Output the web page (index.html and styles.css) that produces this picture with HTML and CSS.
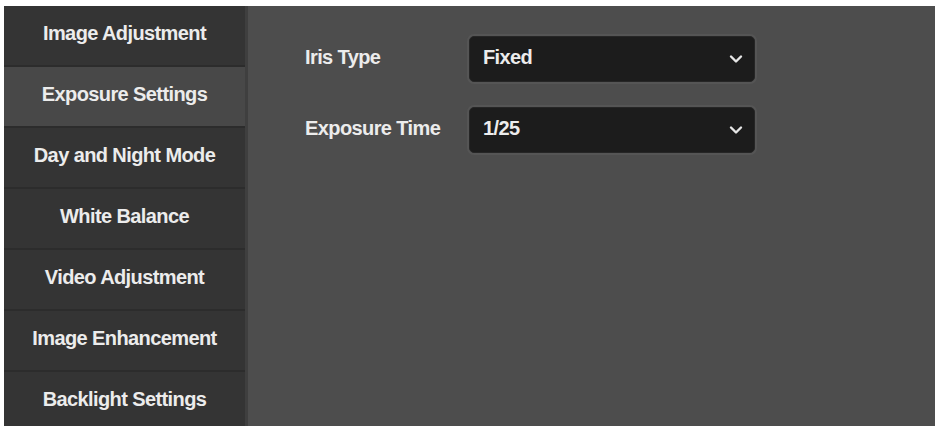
FILE: index.html
```html
<!DOCTYPE html>
<html lang="en">

<head>
    <meta charset="UTF-8">
    <meta name="viewport" content="width=device-width, initial-scale=1.0">
    <title>Image Settings</title>
    <link rel="stylesheet" href="styles.css">
</head>

<body>
    <div class="frame">
        <ul class="menu">
            <li>Image Adjustment</li>
            <li class="active">Exposure Settings</li>
            <li>Day and Night Mode</li>
            <li>White Balance</li>
            <li>Video Adjustment</li>
            <li>Image Enhancement</li>
            <li>Backlight Settings</li>
        </ul>

        <div class="panel">
            <div class="row">
                <label>Iris Type</label>
                <div class="select">
                    <span>Fixed</span>
                    <svg width="14" height="10" viewBox="0 0 14 10"><path d="M2 2.5 L7 7.5 L12 2.5" fill="none" stroke="#e6e6e6" stroke-width="2.4" stroke-linecap="round" stroke-linejoin="round"/></svg>
                </div>
            </div>
            <div class="row">
                <label>Exposure Time</label>
                <div class="select">
                    <span>1/25</span>
                    <svg width="14" height="10" viewBox="0 0 14 10"><path d="M2 2.5 L7 7.5 L12 2.5" fill="none" stroke="#e6e6e6" stroke-width="2.4" stroke-linecap="round" stroke-linejoin="round"/></svg>
                </div>
            </div>
        </div>
    </div>
</body>

</html>
```

FILE: styles.css
```css
body {
    margin: 0;
    padding: 6px 2px 0 4px;
    background-color: #ffffff;
    font-family: "Liberation Sans", Arial, sans-serif;
    color: #ececec;
    height: 426px;
    box-sizing: border-box;
    overflow: hidden;
}

.frame {
    display: flex;
    height: 100%;
    background-color: #4d4d4d;
}

.menu {
    list-style: none;
    margin: 0;
    padding: 0;
    width: 241px;
    background-color: #2c2c2c;
    border-right: 3px solid #3f3f3f;
}

.menu li {
    height: 59px;
    margin-bottom: 2px;
    padding-bottom: 4px;
    box-sizing: border-box;
    display: flex;
    align-items: center;
    justify-content: center;
    background-color: #343434;
    font-size: 20px;
    font-weight: bold;
    letter-spacing: -0.6px;
}

.menu li.active {
    background-color: #484848;
}

.panel {
    flex: 1;
    padding: 30px 0 0 57px;
}

.row {
    display: flex;
    align-items: center;
    margin-bottom: 25px;
}

.row label {
    width: 164px;
    padding-bottom: 4px;
    font-size: 20px;
    font-weight: bold;
    letter-spacing: -0.6px;
}

.select {
    width: 286px;
    height: 46px;
    box-sizing: border-box;
    padding: 0 11px 3px 13px;
    display: flex;
    align-items: center;
    justify-content: space-between;
    background-color: #1c1c1c;
    border: 1px solid #262626;
    border-radius: 5px;
    box-shadow: 0 0 0 2px #555555;
    font-size: 20px;
    font-weight: bold;
    letter-spacing: -0.6px;
}

.select svg {
    margin-top: 3px;
}
```
